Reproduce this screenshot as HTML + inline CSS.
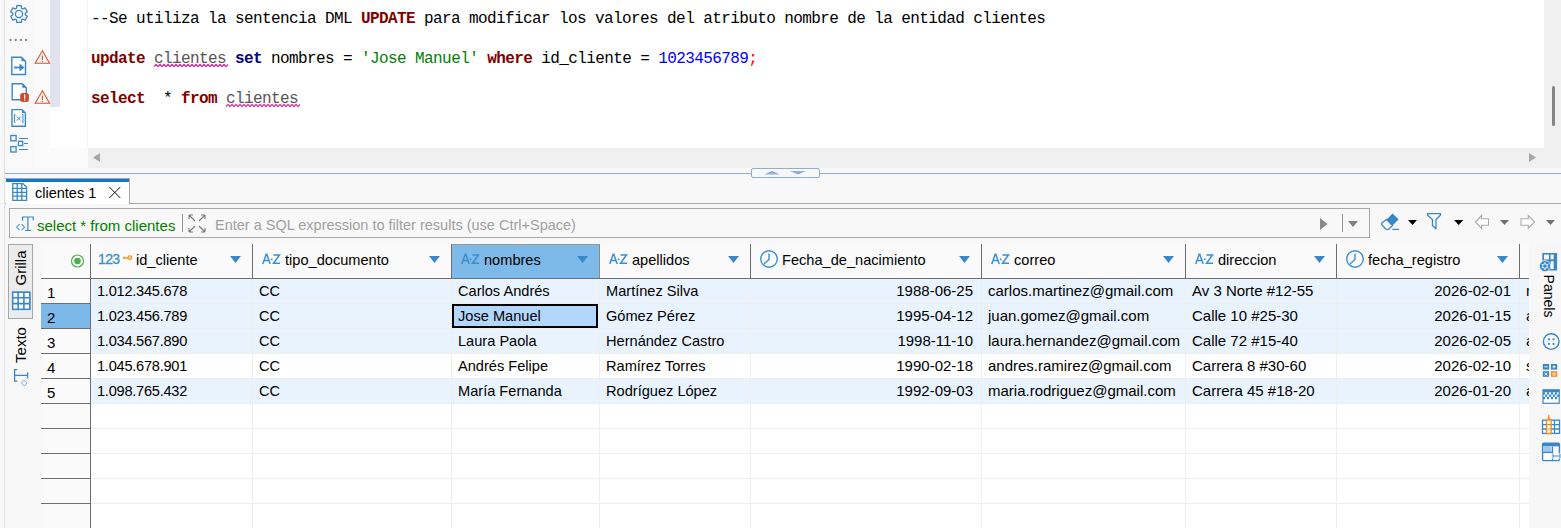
<!DOCTYPE html><html><head><meta charset="utf-8"><style>
*{margin:0;padding:0;box-sizing:border-box}
html,body{width:1561px;height:528px;overflow:hidden;background:#f8f8f8;font-family:"Liberation Sans",sans-serif;position:relative}
.a{position:absolute}
.mono{position:absolute;font-family:"Liberation Mono",monospace;font-size:16px;letter-spacing:-0.6px;white-space:pre;color:#000;line-height:20px}
.k{color:#7f0000;font-weight:bold}
.n{color:#000080;font-weight:bold}
.t{color:#555}
.s{color:#008000}
.num{color:#0000ff}
.semi{color:#ff0000}
.tx{position:absolute;font-size:15px;line-height:18px;color:#000;white-space:nowrap}
svg{position:absolute;overflow:visible}
</style></head><body>
<div class="a" style="left:0;top:0;width:4px;height:528px;background:#f8f8f8"></div>
<div class="a" style="left:4px;top:0;width:1px;height:528px;background:#e2e2e2"></div>
<div class="a" style="left:5px;top:0;width:1556px;height:173px;background:#f9f9f9"></div>
<div class="a" style="left:35px;top:0;width:53px;height:168px;background:#fbfbfb"></div>
<div class="a" style="left:50px;top:0;width:1494px;height:148px;background:#fff"></div>
<div class="a" style="left:50px;top:0;width:10px;height:107px;background:#e3e3f0"></div>
<div class="a" style="left:87px;top:0;width:1px;height:148px;background:#f3f3f3"></div>
<div class="a" style="left:1544px;top:0;width:17px;height:168px;background:#f0f0f0"></div>
<div class="a" style="left:1552px;top:86px;width:3px;height:40px;background:#858585;border-radius:2px"></div>
<div class="a" style="left:88px;top:148px;width:1456px;height:20px;background:#f0f0f0"></div>
<svg style="left:0;top:0" width="1561" height="528"><polygon points="100,153 100,162 93,157.5" fill="#a8a8a8"/><polygon points="1529,153 1529,162 1536,157.5" fill="#a8a8a8"/></svg>
<div class="mono" style="left:91px;top:9px">--Se utiliza la sentencia DML <span class="k">UPDATE</span> para modificar los valores del atributo nombre de la entidad clientes</div>
<div class="mono" style="left:91px;top:49px"><span class="k">update</span> <span class="t">clientes</span> <span class="n">set</span> nombres = <span class="s">'Jose Manuel'</span> <span class="k">where</span> id_cliente = <span class="num">1023456789</span><span class="semi">;</span></div>
<div class="mono" style="left:91px;top:89px"><span class="k">select</span>  * <span class="k">from</span> <span class="t">clientes</span></div>
<svg style="left:0;top:0" width="1561" height="528"><polyline points="154,66.7 156,64.3 158,66.7 160,64.3 162,66.7 164,64.3 166,66.7 168,64.3 170,66.7 172,64.3 174,66.7 176,64.3 178,66.7 180,64.3 182,66.7 184,64.3 186,66.7 188,64.3 190,66.7 192,64.3 194,66.7 196,64.3 198,66.7 200,64.3 202,66.7 204,64.3 206,66.7 208,64.3 210,66.7 212,64.3 214,66.7 216,64.3 218,66.7 220,64.3 222,66.7 224,64.3 226,66.7 228,64.3" fill="none" stroke="#e8208a" stroke-width="1.1"/><polyline points="226,106.7 228,104.3 230,106.7 232,104.3 234,106.7 236,104.3 238,106.7 240,104.3 242,106.7 244,104.3 246,106.7 248,104.3 250,106.7 252,104.3 254,106.7 256,104.3 258,106.7 260,104.3 262,106.7 264,104.3 266,106.7 268,104.3 270,106.7 272,104.3 274,106.7 276,104.3 278,106.7 280,104.3 282,106.7 284,104.3 286,106.7 288,104.3 290,106.7 292,104.3 294,106.7 296,104.3 298,106.7 300,104.3" fill="none" stroke="#e8208a" stroke-width="1.1"/></svg>
<svg style="left:0;top:0" width="1561" height="528"><polygon points="42.4,50.8 49.6,63.3 35.2,63.3" fill="none" stroke="#d9542c" stroke-width="1.1" stroke-linejoin="miter"/><rect x="41.8" y="55.5" width="1.2" height="4.6" fill="#d9542c"/><rect x="41.8" y="61" width="1.2" height="1.2" fill="#d9542c"/><polygon points="42.4,90.8 49.6,103.3 35.2,103.3" fill="none" stroke="#d9542c" stroke-width="1.1" stroke-linejoin="miter"/><rect x="41.8" y="95.5" width="1.2" height="4.6" fill="#d9542c"/><rect x="41.8" y="101" width="1.2" height="1.2" fill="#d9542c"/></svg>
<svg style="left:0;top:0" width="1561" height="528"><polygon points="16.43,8.25 16.79,5.69 21.21,5.69 21.57,8.25 22.70,8.90 25.09,7.93 27.30,11.76 25.27,13.35 25.27,14.65 27.30,16.24 25.09,20.07 22.70,19.10 21.57,19.75 21.21,22.31 16.79,22.31 16.43,19.75 15.30,19.10 12.91,20.07 10.70,16.24 12.73,14.65 12.73,13.35 10.70,11.76 12.91,7.93 15.30,8.90" fill="none" stroke="#3a87c8" stroke-width="1.3" stroke-linejoin="round"/><circle cx="19" cy="14" r="3.6" fill="none" stroke="#3a87c8" stroke-width="1.3"/><circle cx="10.5" cy="40" r="1.15" fill="#8a8374"/><circle cx="15.7" cy="40" r="1.15" fill="#8a8374"/><circle cx="20.9" cy="40" r="1.15" fill="#8a8374"/><circle cx="26" cy="40" r="1.15" fill="#8a8374"/><path d="M11.8,57.3 L21.5,57.3 L25.5,61.3 L25.5,74.5 L11.8,74.5 Z" fill="#fff" stroke="#3a87c8" stroke-width="1.4" stroke-linejoin="miter"/><path d="M21.5,57.3 L21.5,61.3 L25.5,61.3Z" fill="#3a87c8"/><path d="M14,67.5 L20.5,67.5" stroke="#3a87c8" stroke-width="1.8"/><polygon points="19.5,63.5 24.5,67.5 19.5,71.5" fill="#3a87c8"/><path d="M12.2,83.8 L22.3,83.8 L26.3,87.8 L26.3,99.8 L12.2,99.8 Z" fill="#fff" stroke="#3a87c8" stroke-width="1.4" stroke-linejoin="miter"/><path d="M22.3,83.8 L22.3,87.8 L26.3,87.8Z" fill="#3a87c8"/><rect x="20.2" y="92.9" width="8.7" height="9" rx="2.5" fill="#d0482a"/><rect x="24" y="94.5" width="1.3" height="4.2" fill="#fff"/><rect x="24" y="99.5" width="1.3" height="1.2" fill="#fff"/><path d="M12,109.6 L21.9,109.6 L25.4,113.1 L25.4,126.3 L12,126.3 Z" fill="#fff" stroke="#3a87c8" stroke-width="1.4" stroke-linejoin="miter"/><path d="M21.9,109.6 L21.9,113.1 L25.4,113.1Z" fill="#3a87c8"/><path d="M15.5,114.5 L14.5,114.5 L14.5,122.5 L15.5,122.5 M22,114.5 L23,114.5 L23,122.5 L22,122.5 M16.8,116.5 L20.8,120.5 M20.8,116.5 L16.8,120.5" fill="none" stroke="#3a87c8" stroke-width="1"/><rect x="10.8" y="135.5" width="5.3" height="5.3" fill="none" stroke="#3a87c8" stroke-width="1.3"/><rect x="18.4" y="141.3" width="4.3" height="4.3" fill="none" stroke="#3a87c8" stroke-width="1.3"/><rect x="10.8" y="146.7" width="5.3" height="5.3" fill="none" stroke="#3a87c8" stroke-width="1.3"/><path d="M19,138.5 L28,138.5 M24,143.5 L28,143.5 M19,149.5 L28,149.5" stroke="#3a87c8" stroke-width="1.1"/></svg>
<div class="a" style="left:5px;top:168px;width:1556px;height:6px;background:#f8f8f8"></div>
<div class="a" style="left:5px;top:173px;width:1556px;height:1px;background:#8eaed3"></div>
<div class="a" style="left:751px;top:168px;width:69px;height:10px;background:#f8f8f8;border:1px solid #8eaed3;border-radius:2px"></div>
<svg style="left:0;top:0" width="1561" height="528"><polygon points="764,174.5 780,174.5 772,171" fill="#8eaed3"/><polygon points="790,171 806,171 798,174.5" fill="#8eaed3"/></svg>
<div class="a" style="left:5px;top:203px;width:1556px;height:1px;background:#a8a8a8"></div>
<div class="a" style="left:5px;top:178px;width:125px;height:1px;background:#a8a8a8"></div>
<div class="a" style="left:6px;top:179px;width:124px;height:25px;background:#fff;border-right:1px solid #a8a8a8"></div>
<div class="a" style="left:6px;top:179px;width:123px;height:3px;background:#0a78d4"></div>
<div class="tx" style="left:35px;top:184px;font-size:14.5px">clientes 1</div>
<svg style="left:0;top:0" width="1561" height="528"><path d="M109.3,187 L120.3,198 M120.3,187 L109.3,198" stroke="#111" stroke-width="1"/></svg>
<div class="a" style="left:9px;top:208px;width:1361px;height:30px;border:1px solid #a8a8a8;background:#f8f8f8"></div>
<div class="tx" style="left:37px;top:217px;color:#008000">select * from clientes</div>
<div class="a" style="left:182px;top:214px;width:1px;height:18px;background:#909090"></div>
<div class="tx" style="left:215px;top:216px;color:#a0a0a0;font-size:14.5px">Enter a SQL expression to filter results (use Ctrl+Space)</div>
<div class="a" style="left:1342px;top:214px;width:1px;height:18px;background:#909090"></div>
<svg style="left:0;top:0" width="1561" height="528"><path d="M12.8,183.6 L23,183.6 L26.6,187.2 L26.6,200.4 L12.8,200.4 Z" fill="#fff" stroke="#3a87c8" stroke-width="1.3"/><path d="M17.2,184 L17.2,200 M21.8,184 L21.8,200 M13,188.4 L26.4,188.4 M13,192.3 L26.4,192.3 M13,196.2 L26.4,196.2" stroke="#3a87c8" stroke-width="1.3"/><path d="M22.6,220.5 L22.6,217 L33.2,217 L33.2,220.5 M27.9,217 L27.9,230.5 M25.2,230.5 L30.8,230.5" fill="none" stroke="#3a87c8" stroke-width="1.2"/><path d="M19.6,224.2 L16.6,227.2 L19.6,230.2 M21.6,224.2 L24.6,227.2 L21.6,230.2" fill="none" stroke="#5a9bd8" stroke-width="1.15"/><path d="M189,215 L195,221 M189,215 L189,219 M189,215 L193,215 M205,215 L199,221 M205,215 L205,219 M205,215 L201,215 M189,232 L195,226 M189,232 L189,228 M189,232 L193,232 M205,232 L199,226 M205,232 L205,228 M205,232 L201,232" fill="none" stroke="#7a7a7a" stroke-width="1.1"/><polygon points="1320,218 1320,230 1327.5,224" fill="#8a8a8a"/><polygon points="1348,221 1358,221 1353,227" fill="#808080"/><path d="M1392.6,213.5 L1398.6,219.4 L1392.5,225.5 L1386.6,219.5 Z" fill="#3a87c8"/><path d="M1386.6,219.5 L1392.5,225.5 L1389,229 Q1387.5,230 1386,229 L1382,225 Q1381,223.8 1382,222.8 Z" fill="#fff" stroke="#3a87c8" stroke-width="1.4" stroke-linejoin="round"/><path d="M1392.3,229.4 L1399,229.4" stroke="#3a87c8" stroke-width="1.2"/><polygon points="1408,220 1417,220 1412.5,225" fill="#000"/><path d="M1427.5,213.7 L1440.5,213.7 L1440.5,215 L1436,219.5 L1436,228.8 L1432.5,225.5 L1432.5,219.5 L1427.5,215 Z" fill="#fff" stroke="#3a87c8" stroke-width="1.3" stroke-linejoin="round"/><polygon points="1454,220 1463.3,220 1458.6,225" fill="#000"/><path d="M1475.5,222 L1481.6,215.5 L1481.6,218.8 L1488.5,218.8 L1488.5,225.3 L1481.6,225.3 L1481.6,228.5 Z" fill="#fff" stroke="#ababab" stroke-width="1.1" stroke-linejoin="miter"/><polygon points="1500,220 1509,220 1504.5,225" fill="#707070"/><path d="M1534.5,222 L1528.3,215.5 L1528.3,218.8 L1521,218.8 L1521,225.3 L1528.3,225.3 L1528.3,228.5 Z" fill="#fff" stroke="#ababab" stroke-width="1.1" stroke-linejoin="miter"/><polygon points="1546,220 1555,220 1550.5,225" fill="#707070"/></svg>
<div class="a" style="left:41px;top:244px;width:1488px;height:284px;background:#fff"></div>
<div class="a" style="left:41px;top:244px;width:1488px;height:34px;background:#fafafa"></div>
<div class="a" style="left:41px;top:278px;width:49px;height:250px;background:#fafafa"></div>
<div class="a" style="left:91px;top:279px;width:1438px;height:25px;background:#e9f3fe"></div>
<div class="a" style="left:91px;top:304px;width:1438px;height:25px;background:#e9f3fe"></div>
<div class="a" style="left:91px;top:329px;width:1438px;height:25px;background:#e9f3fe"></div>
<div class="a" style="left:91px;top:354px;width:1438px;height:25px;background:#ffffff"></div>
<div class="a" style="left:91px;top:379px;width:1438px;height:25px;background:#e9f3fe"></div>
<div class="a" style="left:91px;top:303px;width:1438px;height:1px;background:#eeeeee"></div>
<div class="a" style="left:91px;top:328px;width:1438px;height:1px;background:#eeeeee"></div>
<div class="a" style="left:91px;top:353px;width:1438px;height:1px;background:#eeeeee"></div>
<div class="a" style="left:91px;top:378px;width:1438px;height:1px;background:#eeeeee"></div>
<div class="a" style="left:91px;top:403px;width:1438px;height:1px;background:#eeeeee"></div>
<div class="a" style="left:91px;top:428px;width:1438px;height:1px;background:#eeeeee"></div>
<div class="a" style="left:91px;top:453px;width:1438px;height:1px;background:#eeeeee"></div>
<div class="a" style="left:91px;top:478px;width:1438px;height:1px;background:#eeeeee"></div>
<div class="a" style="left:91px;top:503px;width:1438px;height:1px;background:#eeeeee"></div>
<div class="a" style="left:91px;top:528px;width:1438px;height:1px;background:#eeeeee"></div>
<div class="a" style="left:252px;top:278px;width:1px;height:250px;background:#eeeeee"></div>
<div class="a" style="left:451px;top:278px;width:1px;height:250px;background:#eeeeee"></div>
<div class="a" style="left:599px;top:278px;width:1px;height:250px;background:#eeeeee"></div>
<div class="a" style="left:750px;top:278px;width:1px;height:250px;background:#eeeeee"></div>
<div class="a" style="left:981px;top:278px;width:1px;height:250px;background:#eeeeee"></div>
<div class="a" style="left:1185px;top:278px;width:1px;height:250px;background:#eeeeee"></div>
<div class="a" style="left:1336px;top:278px;width:1px;height:250px;background:#eeeeee"></div>
<div class="a" style="left:1519px;top:278px;width:1px;height:250px;background:#eeeeee"></div>
<div class="a" style="left:451px;top:244px;width:149px;height:35px;background:#7db9e9;border-left:1px solid #6e6e6e;border-right:1px solid #8a8a8a;border-top:1px solid #9a9a9a;border-bottom:1px solid #6e6e6e"></div>
<div class="a" style="left:41px;top:278px;width:1488px;height:1px;background:#6e6e6e"></div>
<div class="a" style="left:90px;top:244px;width:1px;height:34px;background:#6e6e6e"></div>
<div class="a" style="left:252px;top:244px;width:1px;height:34px;background:#6e6e6e"></div>
<div class="a" style="left:750px;top:244px;width:1px;height:34px;background:#6e6e6e"></div>
<div class="a" style="left:981px;top:244px;width:1px;height:34px;background:#6e6e6e"></div>
<div class="a" style="left:1185px;top:244px;width:1px;height:34px;background:#6e6e6e"></div>
<div class="a" style="left:1336px;top:244px;width:1px;height:34px;background:#6e6e6e"></div>
<div class="a" style="left:1519px;top:244px;width:1px;height:34px;background:#6e6e6e"></div>
<div class="a" style="left:90px;top:244px;width:1px;height:284px;background:#6e6e6e"></div>
<div class="a" style="left:41px;top:304px;width:49px;height:25px;background:#7db9e8"></div>
<div class="a" style="left:41px;top:303px;width:49px;height:1px;background:#6e6e6e"></div>
<div class="a" style="left:41px;top:328px;width:49px;height:1px;background:#6e6e6e"></div>
<div class="a" style="left:41px;top:353px;width:49px;height:1px;background:#6e6e6e"></div>
<div class="a" style="left:41px;top:378px;width:49px;height:1px;background:#6e6e6e"></div>
<div class="a" style="left:41px;top:403px;width:49px;height:1px;background:#6e6e6e"></div>
<div class="a" style="left:41px;top:428px;width:49px;height:1px;background:#6e6e6e"></div>
<div class="a" style="left:41px;top:453px;width:49px;height:1px;background:#6e6e6e"></div>
<div class="a" style="left:41px;top:478px;width:49px;height:1px;background:#6e6e6e"></div>
<div class="a" style="left:41px;top:503px;width:49px;height:1px;background:#6e6e6e"></div>
<div class="a" style="left:41px;top:528px;width:49px;height:1px;background:#6e6e6e"></div>
<div class="tx" style="left:47px;top:284px">1</div>
<div class="tx" style="left:47px;top:309px">2</div>
<div class="tx" style="left:47px;top:334px">3</div>
<div class="tx" style="left:47px;top:359px">4</div>
<div class="tx" style="left:47px;top:384px">5</div>
<svg style="left:0;top:0" width="1561" height="528"><circle cx="77.5" cy="261" r="6" fill="none" stroke="#4caf50" stroke-width="1.2"/><circle cx="77.5" cy="261" r="3.3" fill="#4caf50"/><polygon points="230,256 241,256 235.5,263" fill="#3a87c8"/><polygon points="429,256 440,256 434.5,263" fill="#3a87c8"/><polygon points="577,256 588,256 582.5,263" fill="#3a87c8"/><polygon points="728,256 739,256 733.5,263" fill="#3a87c8"/><polygon points="959,256 970,256 964.5,263" fill="#3a87c8"/><polygon points="1163,256 1174,256 1168.5,263" fill="#3a87c8"/><polygon points="1314,256 1325,256 1319.5,263" fill="#3a87c8"/><polygon points="1497,256 1508,256 1502.5,263" fill="#3a87c8"/></svg>
<div class="tx" style="left:98px;top:250px;font-size:14px;letter-spacing:-0.6px;color:#3a8fd0;-webkit-text-stroke:0.3px #3a8fd0">123</div>
<svg style="left:0;top:0" width="1561" height="528"><circle cx="129.8" cy="257.6" r="1.8" fill="none" stroke="#f08c1a" stroke-width="1.3"/><path d="M123,258.2 L128,258.2 M124.2,258.2 L124.2,256.6" stroke="#f08c1a" stroke-width="1.3"/></svg>
<div class="tx" style="left:136px;top:251px;font-size:14.6px">id_cliente</div>
<svg style="left:0;top:0" width="1561" height="528"><path d="M262.8,264 L266.2,254.3 L266.8,254.3 L270.2,264 M264.2,260.5 L268.8,260.5 M273.5,255 L279.5,255 L273.5,263.3 L280,263.3" fill="none" stroke="#3a8fd0" stroke-width="1.5"/><rect x="270.9" y="258.5" width="1.6" height="1.6" fill="#3a8fd0"/></svg>
<div class="tx" style="left:285px;top:251px;font-size:14.6px">tipo_documento</div>
<svg style="left:0;top:0" width="1561" height="528"><path d="M461.8,264 L465.2,254.3 L465.8,254.3 L469.2,264 M463.2,260.5 L467.8,260.5 M472.5,255 L478.5,255 L472.5,263.3 L479,263.3" fill="none" stroke="#3a8fd0" stroke-width="1.5"/><rect x="469.9" y="258.5" width="1.6" height="1.6" fill="#3a8fd0"/></svg>
<div class="tx" style="left:484px;top:251px;font-size:14.6px">nombres</div>
<svg style="left:0;top:0" width="1561" height="528"><path d="M609.8,264 L613.2,254.3 L613.8,254.3 L617.2,264 M611.2,260.5 L615.8,260.5 M620.5,255 L626.5,255 L620.5,263.3 L627,263.3" fill="none" stroke="#3a8fd0" stroke-width="1.5"/><rect x="617.9" y="258.5" width="1.6" height="1.6" fill="#3a8fd0"/></svg>
<div class="tx" style="left:632px;top:251px;font-size:14.6px">apellidos</div>
<svg style="left:0;top:0" width="1561" height="528"><circle cx="769" cy="259" r="8.3" fill="none" stroke="#3a8fd0" stroke-width="1.4"/><path d="M769,253.5 L769,259.5 L764,264" fill="none" stroke="#3a8fd0" stroke-width="1.4"/></svg>
<div class="tx" style="left:782px;top:251px;font-size:14.6px">Fecha_de_nacimiento</div>
<svg style="left:0;top:0" width="1561" height="528"><path d="M991.8,264 L995.2,254.3 L995.8,254.3 L999.2,264 M993.2,260.5 L997.8,260.5 M1002.5,255 L1008.5,255 L1002.5,263.3 L1009,263.3" fill="none" stroke="#3a8fd0" stroke-width="1.5"/><rect x="999.9" y="258.5" width="1.6" height="1.6" fill="#3a8fd0"/></svg>
<div class="tx" style="left:1014px;top:251px;font-size:14.6px">correo</div>
<svg style="left:0;top:0" width="1561" height="528"><path d="M1195.8,264 L1199.2,254.3 L1199.8,254.3 L1203.2,264 M1197.2,260.5 L1201.8,260.5 M1206.5,255 L1212.5,255 L1206.5,263.3 L1213,263.3" fill="none" stroke="#3a8fd0" stroke-width="1.5"/><rect x="1203.9" y="258.5" width="1.6" height="1.6" fill="#3a8fd0"/></svg>
<div class="tx" style="left:1218px;top:251px;font-size:14.6px">direccion</div>
<svg style="left:0;top:0" width="1561" height="528"><circle cx="1355" cy="259" r="8.3" fill="none" stroke="#3a8fd0" stroke-width="1.4"/><path d="M1355,253.5 L1355,259.5 L1350,264" fill="none" stroke="#3a8fd0" stroke-width="1.4"/></svg>
<div class="tx" style="left:1368px;top:251px;font-size:14.6px">fecha_registro</div>
<div class="tx" style="left:97px;top:282px;font-size:14.6px;letter-spacing:-0.25px">1.012.345.678</div>
<div class="tx" style="left:259px;top:282px;font-size:14.6px">CC</div>
<div class="tx" style="left:458px;top:282px;font-size:14.6px">Carlos Andrés</div>
<div class="tx" style="left:606px;top:282px;font-size:14.6px">Martínez Silva</div>
<div class="tx" style="left:750px;top:282px;width:223px;text-align:right;font-size:15px">1988-06-25</div>
<div class="tx" style="left:988px;top:282px;font-size:15px">carlos.martinez@gmail.com</div>
<div class="tx" style="left:1192px;top:282px;font-size:15px">Av 3 Norte #12-55</div>
<div class="tx" style="left:1336px;top:282px;width:175px;text-align:right;font-size:15px">2026-02-01</div>
<div class="tx" style="left:1526px;top:282px">m</div>
<div class="tx" style="left:97px;top:307px;font-size:14.6px;letter-spacing:-0.25px">1.023.456.789</div>
<div class="tx" style="left:259px;top:307px;font-size:14.6px">CC</div>
<div class="tx" style="left:458px;top:307px;font-size:14.6px">Jose Manuel</div>
<div class="tx" style="left:606px;top:307px;font-size:14.6px">Gómez Pérez</div>
<div class="tx" style="left:750px;top:307px;width:223px;text-align:right;font-size:15px">1995-04-12</div>
<div class="tx" style="left:988px;top:307px;font-size:15px">juan.gomez@gmail.com</div>
<div class="tx" style="left:1192px;top:307px;font-size:15px">Calle 10 #25-30</div>
<div class="tx" style="left:1336px;top:307px;width:175px;text-align:right;font-size:15px">2026-01-15</div>
<div class="tx" style="left:1526px;top:307px">a</div>
<div class="tx" style="left:97px;top:332px;font-size:14.6px;letter-spacing:-0.25px">1.034.567.890</div>
<div class="tx" style="left:259px;top:332px;font-size:14.6px">CC</div>
<div class="tx" style="left:458px;top:332px;font-size:14.6px">Laura Paola</div>
<div class="tx" style="left:606px;top:332px;font-size:14.6px">Hernández Castro</div>
<div class="tx" style="left:750px;top:332px;width:223px;text-align:right;font-size:15px">1998-11-10</div>
<div class="tx" style="left:988px;top:332px;font-size:15px">laura.hernandez@gmail.com</div>
<div class="tx" style="left:1192px;top:332px;font-size:15px">Calle 72 #15-40</div>
<div class="tx" style="left:1336px;top:332px;width:175px;text-align:right;font-size:15px">2026-02-05</div>
<div class="tx" style="left:1526px;top:332px">a</div>
<div class="tx" style="left:97px;top:357px;font-size:14.6px;letter-spacing:-0.25px">1.045.678.901</div>
<div class="tx" style="left:259px;top:357px;font-size:14.6px">CC</div>
<div class="tx" style="left:458px;top:357px;font-size:14.6px">Andrés Felipe</div>
<div class="tx" style="left:606px;top:357px;font-size:14.6px">Ramírez Torres</div>
<div class="tx" style="left:750px;top:357px;width:223px;text-align:right;font-size:15px">1990-02-18</div>
<div class="tx" style="left:988px;top:357px;font-size:15px">andres.ramirez@gmail.com</div>
<div class="tx" style="left:1192px;top:357px;font-size:15px">Carrera 8 #30-60</div>
<div class="tx" style="left:1336px;top:357px;width:175px;text-align:right;font-size:15px">2026-02-10</div>
<div class="tx" style="left:1526px;top:357px">s</div>
<div class="tx" style="left:97px;top:382px;font-size:14.6px;letter-spacing:-0.25px">1.098.765.432</div>
<div class="tx" style="left:259px;top:382px;font-size:14.6px">CC</div>
<div class="tx" style="left:458px;top:382px;font-size:14.6px">María Fernanda</div>
<div class="tx" style="left:606px;top:382px;font-size:14.6px">Rodríguez López</div>
<div class="tx" style="left:750px;top:382px;width:223px;text-align:right;font-size:15px">1992-09-03</div>
<div class="tx" style="left:988px;top:382px;font-size:15px">maria.rodriguez@gmail.com</div>
<div class="tx" style="left:1192px;top:382px;font-size:15px">Carrera 45 #18-20</div>
<div class="tx" style="left:1336px;top:382px;width:175px;text-align:right;font-size:15px">2026-01-20</div>
<div class="tx" style="left:1526px;top:382px">a</div>
<div class="a" style="left:452px;top:304px;width:146px;height:24px;border:2px solid #000;background:#b3d7fb"></div>
<div class="tx" style="left:458px;top:307px;font-size:14.6px">Jose Manuel</div>
<div class="a" style="left:1529px;top:244px;width:32px;height:284px;background:#f7f7f7"></div>
<div class="a" style="left:8px;top:244px;width:25px;height:75px;background:#ececec;border:1px solid #a6a6a6"></div>
<div class="tx" style="left:21px;top:268px;transform:translate(-50%,-50%) rotate(-90deg);font-size:15px">Grilla</div>
<div class="tx" style="left:21px;top:345px;transform:translate(-50%,-50%) rotate(-90deg);font-size:15px">Texto</div>
<svg style="left:0;top:0" width="1561" height="528"><rect x="12.6" y="292.2" width="17.2" height="17.2" fill="#fff" stroke="#3a87c8" stroke-width="1.3"/><path d="M18.1,292 L18.1,309.4 M23.9,292 L23.9,309.4 M12.3,297.8 L29.7,297.8 M12.3,303.6 L29.7,303.6" stroke="#3a87c8" stroke-width="1.6"/><rect x="12.6" y="292.2" width="17.2" height="17.2" fill="none" stroke="#3a87c8" stroke-width="1.3"/><path d="M17.2,369.6 L14.6,369.6 L14.6,381.2 L17.2,381.2 M14.6,375.4 L27.6,375.4 M27.6,372.3 L27.6,378.6" fill="none" stroke="#3a87c8" stroke-width="1.3"/><path d="M24.2,380 L27,383 L24.2,386 L21.4,383 Z" fill="none" stroke="#3a87c8" stroke-width="0.9" opacity="0.75"/><rect x="1542.3" y="253" width="14.8" height="17.5" fill="#3a87c8"/><rect x="1544" y="254.6" width="5" height="4.8" fill="#fff"/><rect x="1550.6" y="254.6" width="3" height="4.8" fill="#fff"/><rect x="1550.8" y="261.2" width="2.8" height="7.8" fill="#fff"/><circle cx="1545" cy="266.1" r="5.6" fill="#3a87c8" stroke="#f7f7f7" stroke-width="0.8"/><path d="M1545,262.2 L1545,263.8 M1545,268.4 L1545,270 M1541.6,264.2 L1543,265 M1547,267.2 L1548.4,268 M1541.6,268 L1543,267.2 M1547,265 L1548.4,264.2" stroke="#fff" stroke-width="1"/><circle cx="1545" cy="266.1" r="2.3" fill="none" stroke="#fff" stroke-width="0.9"/><circle cx="1551.2" cy="341.6" r="7.8" fill="none" stroke="#3a87c8" stroke-width="1.4"/><circle cx="1548.9" cy="339.3" r="1.1" fill="#3a87c8"/><circle cx="1553.5" cy="339.3" r="1.1" fill="#3a87c8"/><circle cx="1548.9" cy="343.90000000000003" r="1.1" fill="#3a87c8"/><circle cx="1553.5" cy="343.90000000000003" r="1.1" fill="#3a87c8"/><rect x="1542.8" y="364" width="6.3" height="5.6" fill="#3a87c8"/><rect x="1550.9" y="364" width="6.3" height="5.6" fill="#3a87c8"/><rect x="1542.8" y="371.2" width="6.3" height="5.6" fill="#3a87c8"/><rect x="1550.9" y="371.2" width="6.3" height="5.6" fill="#f08c1a"/><path d="M1544.3,366.8 L1547.6,366.8 M1552.4,366.8 L1555.7,366.8 M1554,365.2 L1554,368.4 M1544.5,372.8 L1547.4,375.4 M1547.4,372.8 L1544.5,375.4 M1552.4,373.2 L1555.7,373.2 M1552.4,374.9 L1555.7,374.9" stroke="#fff" stroke-width="0.9"/><rect x="1543" y="389.8" width="16.2" height="13.5" fill="#fff" stroke="#3a87c8" stroke-width="1.2"/><rect x="1543" y="389.8" width="16.2" height="2.5" fill="#3a87c8"/><rect x="1543" y="392.3" width="2.1" height="2.3" fill="#3a87c8"/><rect x="1545.1" y="394.6" width="2.1" height="2.3" fill="#3a87c8"/><rect x="1543" y="396.9" width="2.1" height="2.3" fill="#3a87c8"/><rect x="1547" y="392.3" width="2.1" height="2.3" fill="#3a87c8"/><rect x="1549.1" y="394.6" width="2.1" height="2.3" fill="#3a87c8"/><rect x="1547" y="396.9" width="2.1" height="2.3" fill="#3a87c8"/><rect x="1551" y="392.3" width="2.1" height="2.3" fill="#3a87c8"/><rect x="1553.1" y="394.6" width="2.1" height="2.3" fill="#3a87c8"/><rect x="1551" y="396.9" width="2.1" height="2.3" fill="#3a87c8"/><rect x="1555" y="392.3" width="2.1" height="2.3" fill="#3a87c8"/><rect x="1557.1" y="394.6" width="2.1" height="2.3" fill="#3a87c8"/><rect x="1555" y="396.9" width="2.1" height="2.3" fill="#3a87c8"/><rect x="1542.5" y="420.2" width="17" height="13.2" fill="#fff" stroke="#3a87c8" stroke-width="1.3"/><path d="M1542.5,424.6 L1559.5,424.6 M1542.5,429 L1559.5,429 M1554.5,420.2 L1554.5,433.4" stroke="#3a87c8" stroke-width="1.3"/><rect x="1546.5" y="420" width="4.6" height="13.6" fill="#fff" stroke="#f08c1a" stroke-width="1.4"/><path d="M1546.5,424.6 L1551.1,424.6 M1546.5,429 L1551.1,429" stroke="#f08c1a" stroke-width="1.2"/><path d="M1548.8,414.8 L1548.8,419" stroke="#f08c1a" stroke-width="1.2"/><polygon points="1546.8,417.5 1550.8,417.5 1548.8,419.8" fill="#f08c1a"/><rect x="1542.6" y="443.2" width="16.8" height="17.4" rx="1" fill="#fff" stroke="#3a87c8" stroke-width="1.4"/><rect x="1542.6" y="443.2" width="16.8" height="3.2" fill="#3a87c8"/><rect x="1543.4" y="446.4" width="8" height="5.6" fill="#9ccaf0"/><path d="M1542.6,452.4 L1552.5,452.4 M1552.5,446.4 L1552.5,460.6" stroke="#3a87c8" stroke-width="1.3"/><rect x="1551.5" y="453.5" width="9.5" height="5" fill="#f7f7f7"/><path d="M1553,456 L1560,456 M1553,454 L1553,458 M1560,454 L1560,458" stroke="#3a87c8" stroke-width="0.9"/></svg>
<div class="tx" style="left:1549px;top:296px;transform:translate(-50%,-50%) rotate(90deg);font-size:14px;line-height:14px">Panels</div>
</body></html>
